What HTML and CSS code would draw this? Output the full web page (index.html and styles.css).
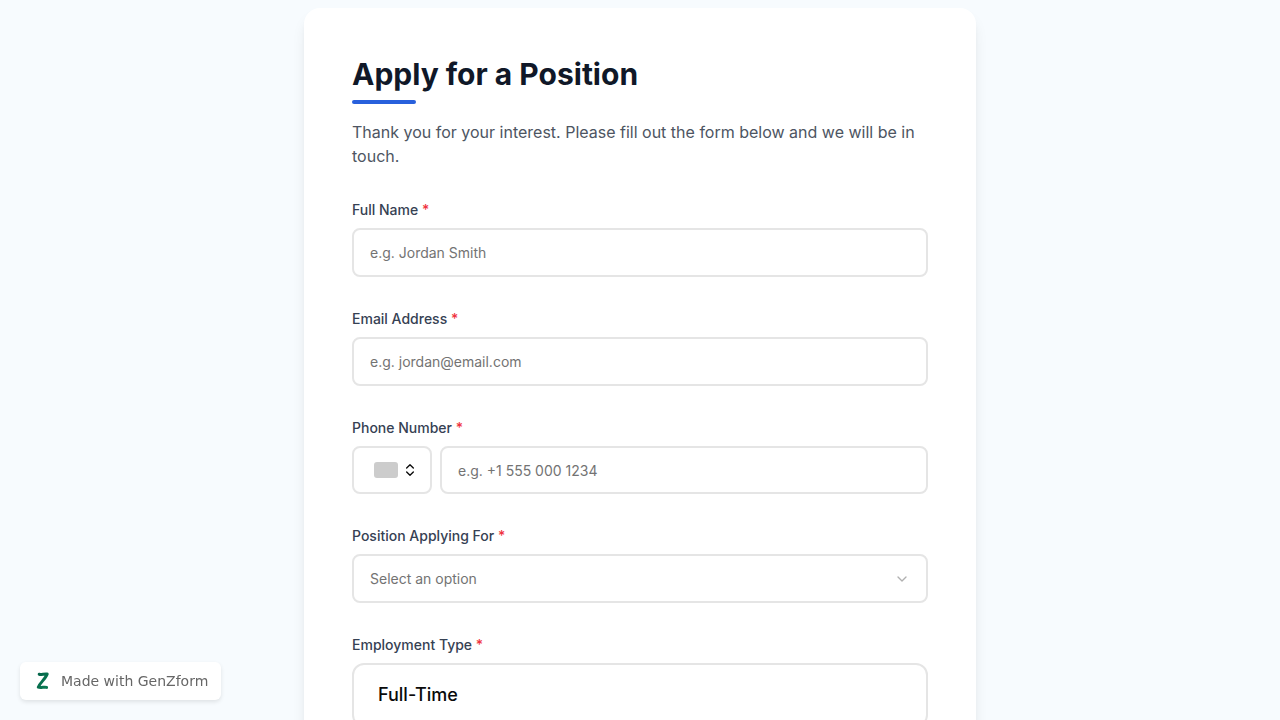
FILE: index.html
```html
<!DOCTYPE html>
<html lang="en">
<head>
<meta charset="utf-8">
<meta name="viewport" content="width=device-width, initial-scale=1">
<title>Apply for a Position</title>
<link rel="stylesheet" href="styles.css">
</head>
<body>
<main class="page">
  <form class="card">
    <header class="intro">
      <h1 class="title">Apply for a Position</h1>
      <div class="accent"></div>
      <p class="lead">Thank you for your interest. Please fill out the form below and we will be in touch.</p>
    </header>

    <div class="field">
      <label class="label" for="name">Full Name <span class="required">*</span></label>
      <input class="control" id="name" type="text" placeholder="e.g. Jordan Smith" required>
    </div>

    <div class="field">
      <label class="label" for="email">Email Address <span class="required">*</span></label>
      <input class="control" id="email" type="email" placeholder="e.g. jordan@email.com" required>
    </div>

    <div class="field">
      <label class="label" for="phone">Phone Number <span class="required">*</span></label>
      <div class="phone-row">
        <button class="country" type="button" aria-label="Country code">
          <span class="flag"></span>
          <svg class="sort-icon" viewBox="0 0 24 24" fill="none" stroke="currentColor" stroke-width="2" stroke-linecap="round" stroke-linejoin="round" aria-hidden="true"><path d="m7 15 5 5 5-5"/><path d="m7 9 5-5 5 5"/></svg>
        </button>
        <input class="control control-phone" id="phone" type="tel" placeholder="e.g. +1 555 000 1234" required>
      </div>
    </div>

    <div class="field">
      <label class="label" for="position">Position Applying For <span class="required">*</span></label>
      <div class="select-wrap">
        <select class="control select" id="position" required>
          <option value="">Select an option</option>
        </select>
        <svg class="chevron" viewBox="0 0 24 24" fill="none" stroke="currentColor" stroke-width="2" stroke-linecap="round" stroke-linejoin="round" aria-hidden="true"><path d="m6 9 6 6 6-6"/></svg>
      </div>
    </div>

    <fieldset class="field group">
      <legend class="label legend">Employment Type <span class="required">*</span></legend>
      <label class="choice"><input class="choice-input" type="radio" name="employment" value="full-time">Full-Time</label>
    </fieldset>
  </form>
</main>

<a class="badge" href="#">
  <svg class="badge-logo" viewBox="0 0 16 20" fill="none" stroke-linecap="round" stroke-linejoin="round" aria-hidden="true">
    <defs>
      <linearGradient id="logo-fill" x1="0" y1="0" x2="1" y2="1">
        <stop offset="0" stop-color="#05664a"/>
        <stop offset="1" stop-color="#0b7a52"/>
      </linearGradient>
    </defs>
    <path d="M4.200 3.300C6.500 4 9 2.600 12.200 3C10.500 8 5 11.500 3.300 16.200C6 17.300 9 15.500 11.600 16.400" stroke="url(#logo-fill)" stroke-width="3"/>
  </svg>
  <span>Made with GenZform</span>
</a>
</body>
</html>
```
FILE: styles.css
```css
* {
  box-sizing: border-box;
}

body {
  margin: 0;
  background: #f7fbfe;
  font-family: Inter, "Liberation Sans", sans-serif;
  color: #0f172a;
}

.page {
  max-width: 672px;
  margin: 0 auto;
  padding: 8px 0;
}

.card {
  display: flex;
  flex-direction: column;
  gap: 32px;
  padding: 48px;
  background: #fff;
  border-radius: 16px;
  box-shadow: 0 10px 15px -3px rgba(0, 0, 0, 0.1), 0 4px 6px -4px rgba(0, 0, 0, 0.1);
}

.title {
  margin: 0;
  font-size: 30px;
  line-height: 36px;
  font-weight: 700;
  color: #101828;
}

.accent {
  width: 64px;
  height: 4px;
  margin: 8px 0 16px;
  border-radius: 2px;
  background: #2860dc;
}

.lead {
  margin: 0;
  font-size: 16px;
  line-height: 24px;
  color: #4d5562;
}

.field {
  display: flex;
  flex-direction: column;
  gap: 8px;
}

.label {
  font-size: 14px;
  line-height: 20px;
  font-weight: 500;
  color: #364153;
}

.required {
  color: #ef3340;
}

.control {
  width: 100%;
  height: 49px;
  padding: 0 16px;
  border: 2px solid #e5e5e5;
  border-radius: 8px;
  background: #fff;
  font: inherit;
  font-size: 14px;
  color: #0f172a;
}

.control::placeholder {
  color: #737373;
}

.phone-row {
  display: flex;
  gap: 8px;
}

.country {
  display: flex;
  flex: none;
  align-items: center;
  justify-content: flex-end;
  gap: 4px;
  width: 80px;
  height: 48px;
  padding: 0 12px;
  border: 2px solid #e5e5e5;
  border-radius: 8px;
  background: #fff;
  color: #0a0a0a;
}

.flag {
  width: 24px;
  height: 16px;
  border-radius: 3px;
  background: #cccccc;
}

.sort-icon {
  width: 16px;
  height: 16px;
}

.control-phone {
  flex: 1;
  height: 48px;
}

.select-wrap {
  display: grid;
  align-items: center;
}

.select-wrap > * {
  grid-area: 1 / 1;
}

.select {
  appearance: none;
  color: #737373;
}

.chevron {
  justify-self: end;
  width: 16px;
  height: 16px;
  margin-right: 18px;
  color: #b0b0b0;
  pointer-events: none;
}

.group {
  display: block;
  min-width: 0;
  margin: 0;
  padding: 0;
  border: 0;
}

.legend {
  margin-bottom: 8px;
  padding: 0;
}

.choice {
  display: block;
  padding: 16px 24px;
  border: 2px solid #e5e5e5;
  border-radius: 12px;
  font-size: 18px;
  line-height: 28px;
  font-weight: 500;
  color: #0a0a0a;
}

.choice-input {
  position: absolute;
  opacity: 0;
}

.badge {
  position: fixed;
  left: 20px;
  bottom: 20px;
  display: flex;
  align-items: center;
  gap: 10px;
  padding: 9px 13px 9px 15px;
  border-radius: 6px;
  background: #fff;
  box-shadow: 0 2px 4px rgba(0, 0, 0, 0.1);
  font-family: "DejaVu Sans", sans-serif;
  font-size: 14px;
  line-height: 20px;
  color: #666;
  text-decoration: none;
}

.badge-logo {
  width: 16px;
  height: 20px;
}
```
